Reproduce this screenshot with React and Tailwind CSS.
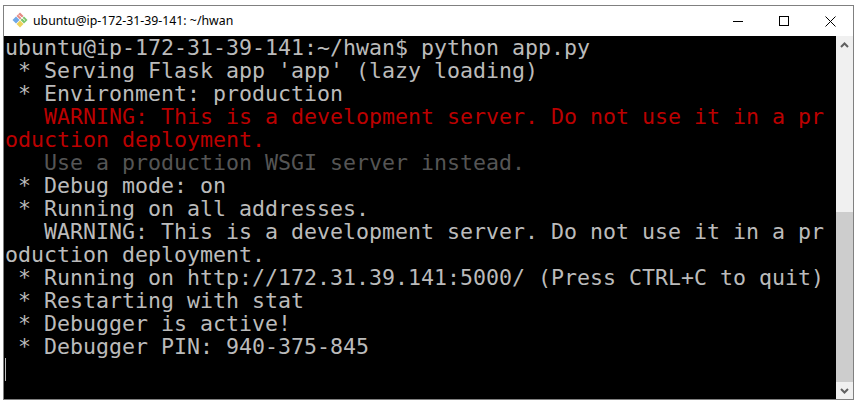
const lines = [
  ["ubuntu@ip-172-31-39-141:~/hwan$ python app.py", "text-[#bbbbbb]"],
  [" * Serving Flask app 'app' (lazy loading)", "text-[#bbbbbb]"],
  [" * Environment: production", "text-[#bbbbbb]"],
  ["   WARNING: This is a development server. Do not use it in a pr", "text-[#bb0000]"],
  ["oduction deployment.", "text-[#bb0000]"],
  ["   Use a production WSGI server instead.", "text-[#555555]"],
  [" * Debug mode: on", "text-[#bbbbbb]"],
  [" * Running on all addresses.", "text-[#bbbbbb]"],
  ["   WARNING: This is a development server. Do not use it in a pr", "text-[#bbbbbb]"],
  ["oduction deployment.", "text-[#bbbbbb]"],
  [" * Running on http://172.31.39.141:5000/ (Press CTRL+C to quit)", "text-[#bbbbbb]"],
  [" * Restarting with stat", "text-[#bbbbbb]"],
  [" * Debugger is active!", "text-[#bbbbbb]"],
  [" * Debugger PIN: 940-375-845", "text-[#bbbbbb]"],
];

function GitIcon() {
  return (
    <svg width="16" height="16" viewBox="0 0 16 16" className="shrink-0">
      <polygon points="8,0.5 11.5,4 8,7.5 4.500,4" fill="#e58a84" />
      <polygon points="4,4.500 7.500,8 4,11.500 0.500,8" fill="#6fa8e8" />
      <polygon points="12,4.500 15.500,8 12,11.500 8.500,8" fill="#7cc56a" />
      <polygon points="8,8.500 11.500,12 8,15.500 4.500,12" fill="#ecd25a" />
      <path d="M6.500 3 L13 8.500" stroke="#ffffff" strokeWidth="1" fill="none" />
    </svg>
  );
}

export default function App() {
  return (
    <div className="w-[859px] h-[407px] bg-white pt-[5px] pl-[3px] pr-[5px] pb-[7px]">
      <div className="w-full h-full border border-[#808080] flex flex-col bg-white">
        <div className="h-[30px] shrink-0 flex items-center bg-white">
          <div className="ml-[8px] mr-[5px] mb-[2px] flex items-center"><GitIcon /></div>
          <span className="text-[12.3px] text-black font-['Noto_Sans','Liberation_Sans',sans-serif]">ubuntu@ip-172-31-39-141: ~/hwan</span>
          <div className="ml-auto flex items-center h-full">
            <div className="w-[46px] h-full flex items-center justify-center">
              <div className="w-[10px] h-px bg-black" />
            </div>
            <div className="w-[46px] h-full flex items-center justify-center">
              <div className="w-[10px] h-[10px] border border-black" />
            </div>
            <div className="w-[46px] h-full flex items-center justify-center">
              <svg width="11" height="11" viewBox="0 0 11 11"><path d="M0.500 0.500 L10.500 10.500 M10.500 0.500 L0.500 10.500" stroke="#000" strokeWidth="1" fill="none" /></svg>
            </div>
          </div>
        </div>
        <div className="flex-1 flex min-h-0">
          <div className="flex-1 bg-black pl-px overflow-hidden relative">
            {lines.map(([t, c], i) => (
              <div key={i} className={`h-[23px] leading-[23px] text-[21.6px] whitespace-pre font-['DejaVu_Sans_Mono',monospace] ${c}`}>{t}</div>
            ))}
            <div className="absolute left-px top-[322px] w-px h-[23px] bg-[#bbbbbb]" />
          </div>
          <div className="w-[17px] shrink-0 bg-[#f0f0f0] flex flex-col">
            <div className="h-[17px] flex items-center justify-center">
              <svg width="9" height="6" viewBox="0 0 9 6"><path d="M1 5 L4.500 1.500 L8 5" stroke="#606060" strokeWidth="2" fill="none" /></svg>
            </div>
            <div className="flex-1 flex flex-col justify-end">
              <div className="h-[170px] bg-[#cdcdcd]" />
            </div>
            <div className="h-[17px] flex items-center justify-center">
              <svg width="9" height="6" viewBox="0 0 9 6"><path d="M1 1 L4.500 4.500 L8 1" stroke="#606060" strokeWidth="2" fill="none" /></svg>
            </div>
          </div>
        </div>
      </div>
    </div>
  );
}
